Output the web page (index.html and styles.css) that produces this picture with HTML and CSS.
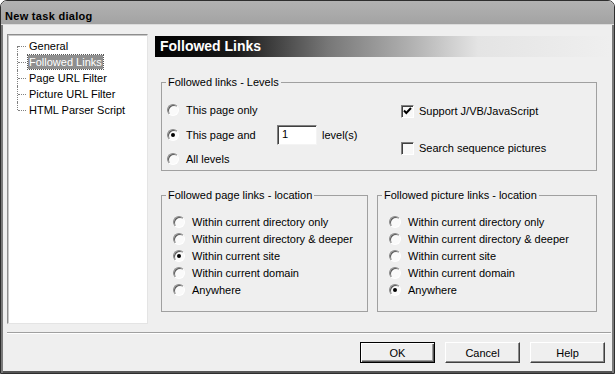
FILE: index.html
```html
<!DOCTYPE html>
<html>
<head>
    <meta charset="utf-8" />
    <title>New task dialog</title>
    <link rel="stylesheet" href="styles.css">
</head>
<body>
    <div class="window">
        <div class="titlebar">New task dialog</div>
        <div class="client">
            <div class="main">
                <div class="tree">
                    <ul class="tree-list">
                        <li class="tree-item"><span class="tree-label">General</span></li>
                        <li class="tree-item"><span class="tree-label selected">Followed Links</span></li>
                        <li class="tree-item"><span class="tree-label">Page URL Filter</span></li>
                        <li class="tree-item"><span class="tree-label">Picture URL Filter</span></li>
                        <li class="tree-item"><span class="tree-label">HTML Parser Script</span></li>
                    </ul>
                </div>

                <div class="page">
                    <div class="page-header">Followed Links</div>

                    <fieldset class="group group-levels">
                        <legend class="group-title">Followed links - Levels</legend>
                        <div class="levels">
                            <div class="levels-left">
                                <div class="opt"><span class="radio"></span>This page only</div>
                                <div class="opt-row">
                                    <div class="opt opt-fixed"><span class="radio checked"></span>This page and</div>
                                    <span class="textbox">1</span>
                                    <span class="suffix">level(s)</span>
                                </div>
                                <div class="opt"><span class="radio"></span>All levels</div>
                            </div>
                            <div class="levels-right">
                                <div class="opt opt-check">
                                    <span class="check">
                                        <svg width="11" height="11" viewBox="0 0 11 11"><path d="M2 4.5 L4.3 7 L9 2" fill="none" stroke="#000" stroke-width="2"/></svg>
                                    </span>Support J/VB/JavaScript
                                </div>
                                <div class="opt opt-check"><span class="check"></span>Search sequence pictures</div>
                            </div>
                        </div>
                    </fieldset>

                    <div class="locations">
                        <fieldset class="group group-page">
                            <legend class="group-title">Followed page links - location</legend>
                            <div class="radio-list">
                                <div class="opt"><span class="radio"></span>Within current directory only</div>
                                <div class="opt"><span class="radio"></span>Within current directory &amp; deeper</div>
                                <div class="opt"><span class="radio checked"></span>Within current site</div>
                                <div class="opt"><span class="radio"></span>Within current domain</div>
                                <div class="opt"><span class="radio"></span>Anywhere</div>
                            </div>
                        </fieldset>
                        <fieldset class="group group-picture">
                            <legend class="group-title">Followed picture links - location</legend>
                            <div class="radio-list">
                                <div class="opt"><span class="radio"></span>Within current directory only</div>
                                <div class="opt"><span class="radio"></span>Within current directory &amp; deeper</div>
                                <div class="opt"><span class="radio"></span>Within current site</div>
                                <div class="opt"><span class="radio"></span>Within current domain</div>
                                <div class="opt"><span class="radio checked"></span>Anywhere</div>
                            </div>
                        </fieldset>
                    </div>
                </div>
            </div>

            <div class="separator"></div>
            <div class="footer">
                <button class="btn btn-default">OK</button>
                <button class="btn">Cancel</button>
                <button class="btn">Help</button>
            </div>
        </div>
    </div>
</body>
</html>
```

FILE: styles.css
```css
body{
    margin:0;
    background:#fff;
    font-family:"Liberation Sans", Arial, sans-serif;
    font-size:11px;
    color:#000;
}
.window{
    width:615px;
    height:374px;
    box-sizing:border-box;
    border:1px solid #2e2e2e;
    border-radius:7px 7px 0 0;
    background:#efefef;
    display:flex;
    flex-direction:column;
    overflow:hidden;
}
.titlebar{
    height:24px;
    box-sizing:border-box;
    padding:5px 0 0 4px;
    line-height:20px;
    font-weight:bold;
    letter-spacing:0.3px;
    background:linear-gradient(#b2b2b2, #a3a3a3);
    border-bottom:1px solid #dcdcdc;
}
.client{
    flex:1;
    padding:9px 3px 0 6px;
    box-shadow:inset 2px 0 0 #7a7a7a, inset -2px 0 0 #7a7a7a, inset 0 -2px 0 #555;
}
.main{
    display:flex;
    height:290px;
}

/* tree */
.tree{
    width:141px;
    box-sizing:border-box;
    background:#fff;
    border:1px solid;
    border-color:#8e8e8e #e4e4e4 #e4e4e4 #8e8e8e;
    box-shadow:inset 1px 1px 0 #c8c8c8;
}
.tree-list{
    list-style:none;
    margin:0;
    padding:3px 0 0 9px;
}
.tree-item{
    position:relative;
    height:16px;
    line-height:16px;
    padding-left:11px;
}
.tree-item::before{
    content:'';
    position:absolute;
    left:0;
    top:0;
    bottom:0;
    border-left:1px dotted #808080;
}
.tree-item:first-child::before{top:8px;}
.tree-item:last-child::before{bottom:8px;}
.tree-item::after{
    content:'';
    position:absolute;
    left:1px;
    top:8px;
    width:8px;
    border-top:1px dotted #808080;
}
.tree-label{
    display:inline-block;
    padding:0 1px;
    line-height:14px;
}
.tree-label.selected{
    background:#8f8f8f;
    color:#fff;
    outline:1px dotted #555;
}

/* page */
.page{
    width:455px;
    margin-left:7px;
    padding-top:2px;
}
.page-header{
    height:21px;
    line-height:21px;
    padding-left:5px;
    font-size:14px;
    font-weight:bold;
    color:#fff;
    background:linear-gradient(to right, #000 0%, #1a1a1a 18%, #777 38%, #b0b0b0 56%, #e4e4e4 71%, #efefef 100%);
}
.group{
    margin:0;
    padding:0;
    box-sizing:border-box;
    border:1px solid #a0a0a0;
    min-width:0;
}
.group-title{
    margin-left:4px;
    padding:0 2px;
    line-height:13px;
}
.group-levels{
    width:436px;
    margin:19px 0 0 6px;
}
.levels{
    display:grid;
    grid-template-columns:234px 1fr;
    padding:13px 0 3px 5px;
}
.levels-left{
    display:flex;
    flex-direction:column;
}
.levels-left .opt-row{
    margin:7px 0 6px;
}
.levels-right{
    display:flex;
    flex-direction:column;
    gap:21px;
    padding-top:1px;
}
.opt{
    display:flex;
    align-items:center;
    gap:7px;
    height:16px;
    white-space:nowrap;
}
.opt-check{gap:5px;}
.opt-row{
    display:flex;
    align-items:center;
    height:20px;
}
.opt-fixed{width:110px;}
.textbox{
    width:40px;
    height:20px;
    box-sizing:border-box;
    padding-left:4px;
    line-height:17px;
    background:#fff;
    border:1px solid;
    border-color:#808080 #f4f4f4 #f4f4f4 #808080;
    box-shadow:inset 1px 1px 0 #404040;
}
.suffix{margin-left:5px;}

.radio{
    flex:none;
    position:relative;
    width:12px;
    height:12px;
    box-sizing:border-box;
    border-radius:50%;
    border:1px solid;
    border-color:#8a8a8a #fff #fff #8a8a8a;
    background:#fafafa;
    box-shadow:inset 1px 1px 0 #5a5a5a;
}
.radio.checked::after{
    content:'';
    position:absolute;
    left:3px;
    top:3px;
    width:4px;
    height:4px;
    border-radius:50%;
    background:#000;
}
.check{
    flex:none;
    width:13px;
    height:13px;
    box-sizing:border-box;
    border:1px solid;
    border-color:#808080 #fff #fff #808080;
    box-shadow:inset 1px 1px 0 #404040;
    background:#f8f8f8;
}
.check svg{display:block;}

.locations{
    display:flex;
    gap:9px;
    margin:18px 0 0 6px;
}
.group-page{width:207px;}
.group-picture{width:220px;}
.radio-list{
    padding:11px 0 13px 11px;
}
.radio-list .opt{height:17px;}

/* footer */
.separator{
    margin-top:8px;
    border-top:1px solid #a0a0a0;
    border-bottom:1px solid #fff;
}
.footer{
    display:flex;
    justify-content:flex-end;
    gap:10px;
    padding:8px 6px 0 0;
}
.btn{
    width:75px;
    height:21px;
    padding:0;
    font-family:inherit;
    font-size:11px;
    color:#000;
    background:#efefef;
    border:1px solid;
    border-color:#fff #404040 #404040 #fff;
    box-shadow:inset -1px -1px 0 #8a8a8a;
}
.btn-default{
    border:1px solid #000;
    box-shadow:inset 1px 1px 0 #fff, inset -1px -1px 0 #555, inset -2px -2px 0 #999;
}
```
